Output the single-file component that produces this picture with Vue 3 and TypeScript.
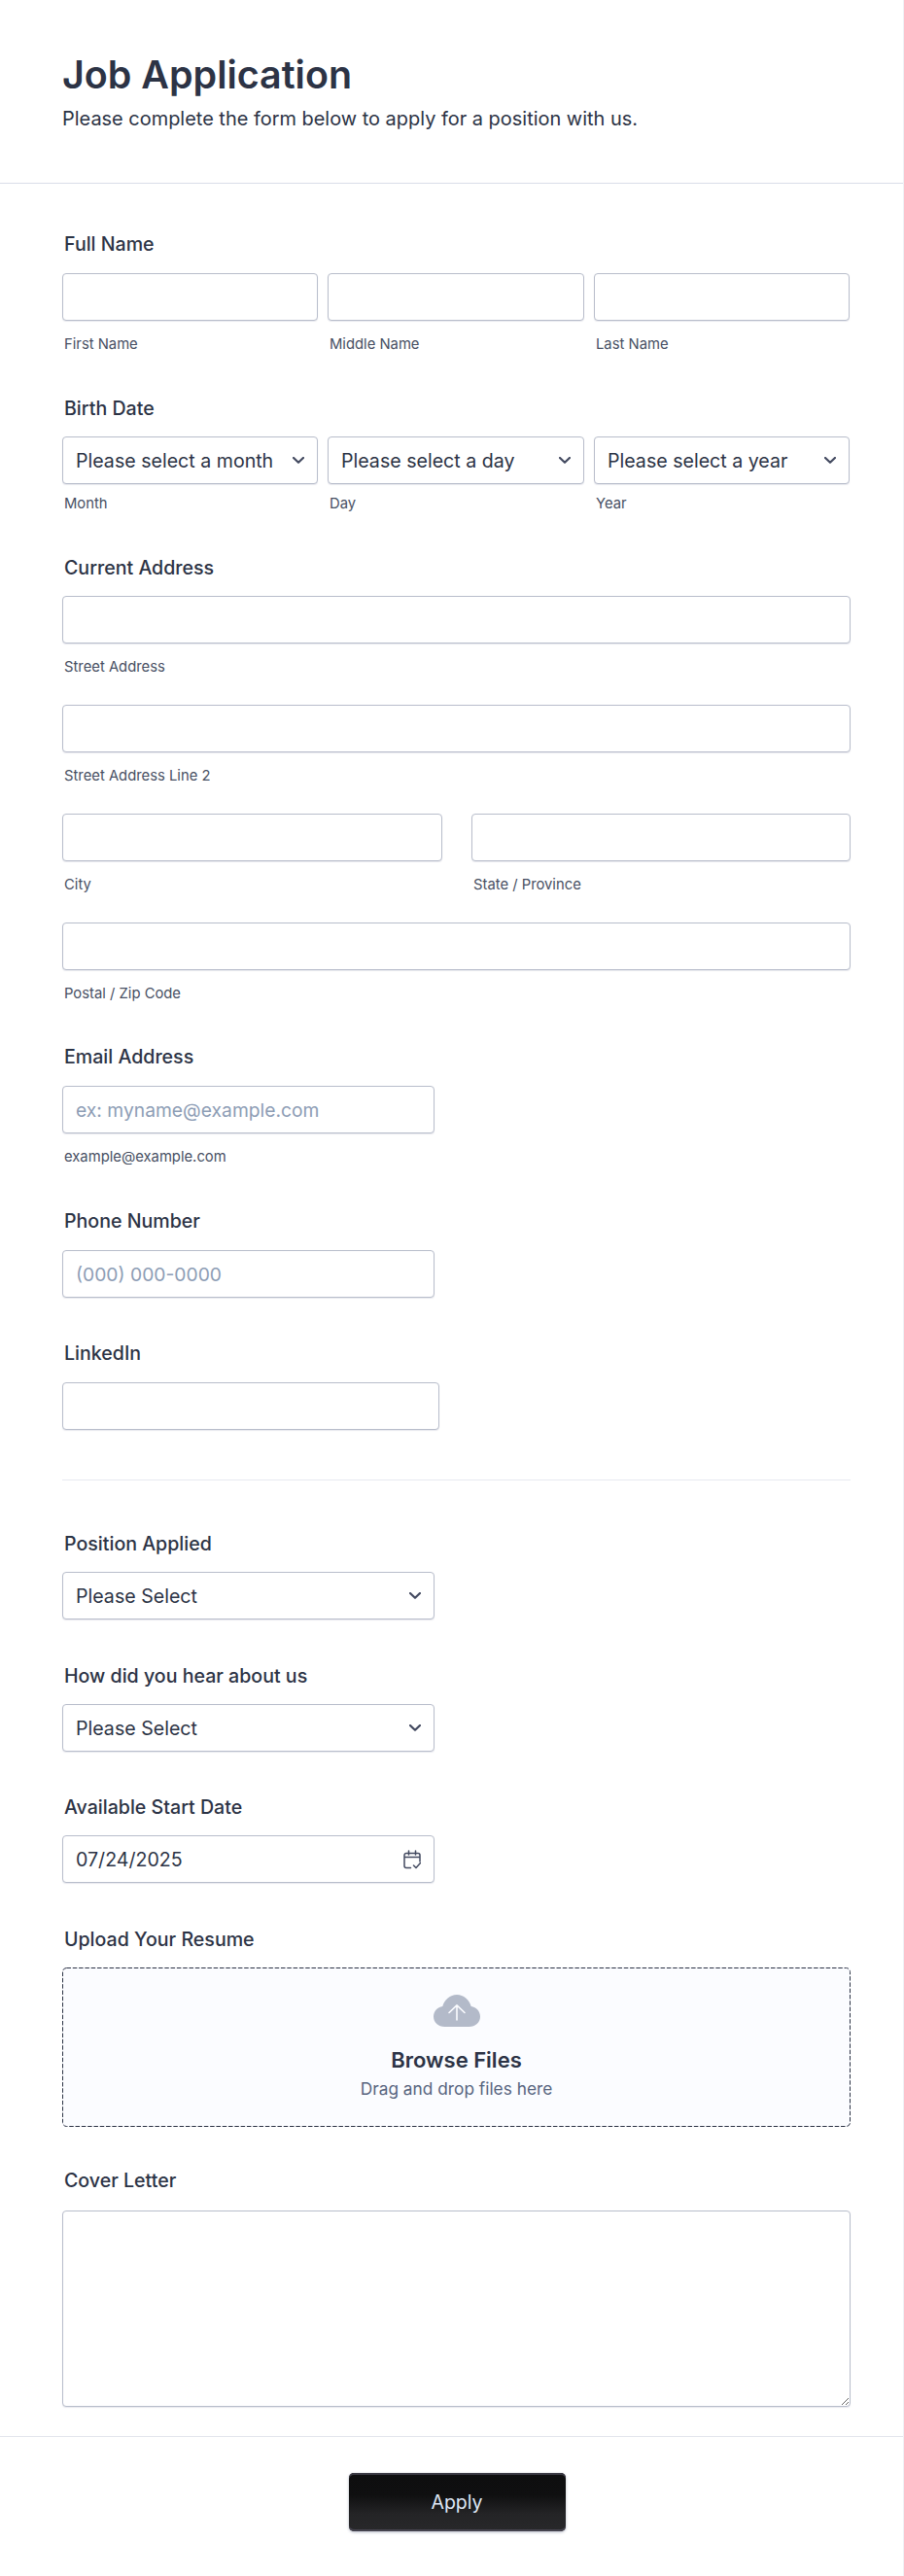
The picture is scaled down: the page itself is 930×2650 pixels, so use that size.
<script setup lang="ts">
interface Sub { label: string; placeholder?: string }
const nameParts: string[] = ['First Name', 'Middle Name', 'Last Name']
const dateParts: Sub[] = [
  { label: 'Month', placeholder: 'Please select a month' },
  { label: 'Day', placeholder: 'Please select a day' },
  { label: 'Year', placeholder: 'Please select a year' },
]
</script>

<template>
  <div class="page">
    <header class="head">
      <h1>Job Application</h1>
      <p>Please complete the form below to apply for a position with us.</p>
    </header>

    <form class="form" @submit.prevent>
      <section class="field f-name">
        <label class="lab wide">Full Name</label>
        <div class="three">
          <div v-for="p in nameParts" :key="p">
            <input class="ctl" type="text" />
            <div class="sub">{{ p }}</div>
          </div>
        </div>
      </section>

      <section class="field">
        <label class="lab">Birth Date</label>
        <div class="three">
          <div v-for="p in dateParts" :key="p.label">
            <div class="ctl sel">
              <span>{{ p.placeholder }}</span>
              <svg class="chev" viewBox="0 0 12 7"><path d="M1 1l5 4.800L11 1" /></svg>
            </div>
            <div class="sub tight">{{ p.label }}</div>
          </div>
        </div>
      </section>

      <section class="field">
        <label class="lab">Current Address</label>
        <input class="ctl" type="text" />
        <div class="sub">Street Address</div>
        <input class="ctl next" type="text" />
        <div class="sub">Street Address Line 2</div>
        <div class="two next">
          <div><input class="ctl" type="text" /><div class="sub">City</div></div>
          <div><input class="ctl" type="text" /><div class="sub">State / Province</div></div>
        </div>
        <input class="ctl next" type="text" />
        <div class="sub">Postal / Zip Code</div>
      </section>

      <section class="field f-email">
        <label class="lab wide">Email Address</label>
        <input class="ctl w383" type="text" placeholder="ex: myname@example.com" />
        <div class="sub">example@example.com</div>
      </section>

      <section class="field">
        <label class="lab wide">Phone Number</label>
        <input class="ctl w383" type="text" placeholder="(000) 000-0000" />
      </section>

      <section class="field f-45">
        <label class="lab wide">LinkedIn</label>
        <input class="ctl w388" type="text" />
      </section>

      <hr class="rule" />

      <section class="field f-position">
        <label class="lab">Position Applied</label>
        <div class="ctl sel w383">
          <span>Please Select</span>
          <svg class="chev" viewBox="0 0 12 7"><path d="M1 1l5 4.800L11 1" /></svg>
        </div>
      </section>

      <section class="field f-46">
        <label class="lab">How did you hear about us</label>
        <div class="ctl sel w383">
          <span>Please Select</span>
          <svg class="chev" viewBox="0 0 12 7"><path d="M1 1l5 4.800L11 1" /></svg>
        </div>
      </section>

      <section class="field f-45">
        <label class="lab">Available Start Date</label>
        <div class="ctl sel w383">
          <span>07/24/2025</span>
          <svg class="cal" viewBox="0 0 18 20" fill="none">
            <path d="M7.500 18.500H3a2 2 0 0 1-2-2v-11a2 2 0 0 1 2-2h12a2 2 0 0 1 2 2V12M1 7.500h16M5.500 1v4M12.500 1v4M10.500 16l2.500 2.500 4.500-5" />
          </svg>
        </div>
      </section>

      <section class="field f-46">
        <label class="lab">Upload Your Resume</label>
        <div class="drop">
          <svg class="dash" width="811" height="164" viewBox="0 0 811 164">
            <rect x="0.5" y="0.5" width="810" height="163" rx="4" />
          </svg>
          <svg class="cloud" viewBox="0 0 48 33">
            <path d="M11.500 33C5 33 0 28.400 0 22.500 0 17.200 3.900 12.800 9.300 12 11.200 5 17 0 24 0s12.800 5 14.700 12C44.100 12.800 48 17.200 48 22.500 48 28.400 43 33 36.500 33Z" fill="#b3bac9" />
            <path d="M24 26V10.800M16 18.500l8-7.700 8 7.700" fill="none" stroke="#fbfcff" stroke-width="1.600" stroke-linecap="round" stroke-linejoin="round" />
          </svg>
          <div class="browse">Browse Files</div>
          <div class="dragtext">Drag and drop files here</div>
        </div>
      </section>

      <section class="field f-cover">
        <label class="lab cover">Cover Letter</label>
        <textarea class="ctl area"></textarea>
      </section>

      <footer class="foot">
        <button class="apply" type="submit">Apply</button>
      </footer>
    </form>
  </div>
</template>

<style scoped>
.page {
  width: 930px;
  height: 2650px;
  background: #fff;
  border-right: 1px solid #eff0f5;
  color: #2c3345;
  font-family: Inter, "Liberation Sans", sans-serif;
  box-sizing: border-box;
  overflow: hidden;
}
.head {
  padding: 53px 64px 52px;
  border-bottom: 1px solid #dadde9;
}
.head h1 {
  margin: 0;
  font-size: 39.4px;
  line-height: 48px;
  font-weight: 600;
  color: #2c3345;
}
.head p {
  margin: 7px 0 0;
  font-size: 19.95px;
  line-height: 28px;
  font-weight: 400;
  color: #2c3345;
}
.form {
  padding: 0 54px 0 64px;
}
.field {
  margin-top: 44px;
}
.f-name {
  margin-top: 50px;
}
.f-email {
  margin-top: 43px;
}
.f-45 {
  margin-top: 45px;
}
.f-46 {
  margin-top: 46px;
}
.f-position {
  margin-top: 53px;
}
.f-cover {
  margin-top: 43px;
}
.lab {
  display: block;
  margin: 0 0 17px 2px;
  font-size: 19.6px;
  line-height: 24px;
  font-weight: 500;
  color: #2c3345;
}
.lab.wide {
  margin-bottom: 18px;
}
.lab.cover {
  margin-bottom: 19px;
}
.ctl {
  display: block;
  box-sizing: border-box;
  width: 100%;
  height: 49px;
  margin: 0;
  padding: 0 13px;
  background: #fff;
  border: 1px solid #b8bdcb;
  border-radius: 4px;
  box-shadow: 0 1px 1px rgba(87, 95, 125, 0.14);
  font: 400 19.6px/24px Inter, "Liberation Sans", sans-serif;
  color: #2c3345;
  outline: none;
}
.ctl::placeholder {
  color: #8d9db5;
  font-size: 19.3px;
  opacity: 1;
}
.next {
  margin-top: 29px;
}
.w383 {
  width: 383px;
}
.w388 {
  width: 388px;
}
.three {
  display: grid;
  grid-template-columns: 263px 264px 263px;
  column-gap: 10px;
  width: 811px;
}
.two {
  display: grid;
  grid-template-columns: 391px 390px;
  column-gap: 30px;
}
.sub {
  margin: 14px 0 0 2px;
  font-size: 14.8px;
  line-height: 20px;
  color: #474f63;
}
.sub.tight {
  margin-top: 10px;
}
.sel {
  display: flex;
  align-items: center;
  justify-content: space-between;
}
.chev {
  width: 12px;
  height: 7px;
  flex: none;
  fill: none;
  stroke: #434a60;
  stroke-width: 2.200;
  stroke-linecap: round;
  stroke-linejoin: round;
}
.cal {
  width: 18px;
  height: 20px;
  flex: none;
  stroke: #434a60;
  stroke-width: 1.500;
  stroke-linecap: round;
  stroke-linejoin: round;
}
.drop {
  position: relative;
  box-sizing: border-box;
  height: 164px;
  background: #fbfcff;
  border-radius: 4px;
  text-align: center;
  padding-top: 28px;
}
.dash {
  position: absolute;
  left: 0;
  top: 0;
  fill: none;
  stroke: #2c3345;
  stroke-width: 1;
  stroke-dasharray: 4.500 1.800;
}
.cloud {
  display: block;
  width: 48px;
  height: 33px;
  margin: 0 auto;
}
.browse {
  margin-top: 20px;
  font-size: 22px;
  line-height: 28px;
  font-weight: 600;
  color: #2c3345;
}
.dragtext {
  margin-top: 4px;
  font-size: 17.300px;
  line-height: 24px;
  color: #57647e;
}
.area {
  height: 202px;
  padding: 12px 13px;
  resize: vertical;
}
.rule {
  margin: 51px 0 0;
  border: 0;
  border-top: 1px solid #e8eaf1;
}
.foot {
  margin: 30px -54px 0 -64px;
  padding: 37px 0 0 11px;
  border-top: 1px solid #e3e5ec;
  display: flex;
  justify-content: center;
}
.apply {
  width: 223px;
  height: 60px;
  border: 0;
  border-radius: 5px;
  background: linear-gradient(180deg, #0e0e0f 0%, #0f0f10 38%, #242426 70%, #28282a 100%);
  box-shadow: inset 0 2px 0 #3b3a44, inset 0 -2px 0 #45434e, 0 1px 3px rgba(87, 95, 125, 0.45);
  color: #dfe7f5;
  font: 400 19.500px/24px Inter, "Liberation Sans", sans-serif;
}
</style>
